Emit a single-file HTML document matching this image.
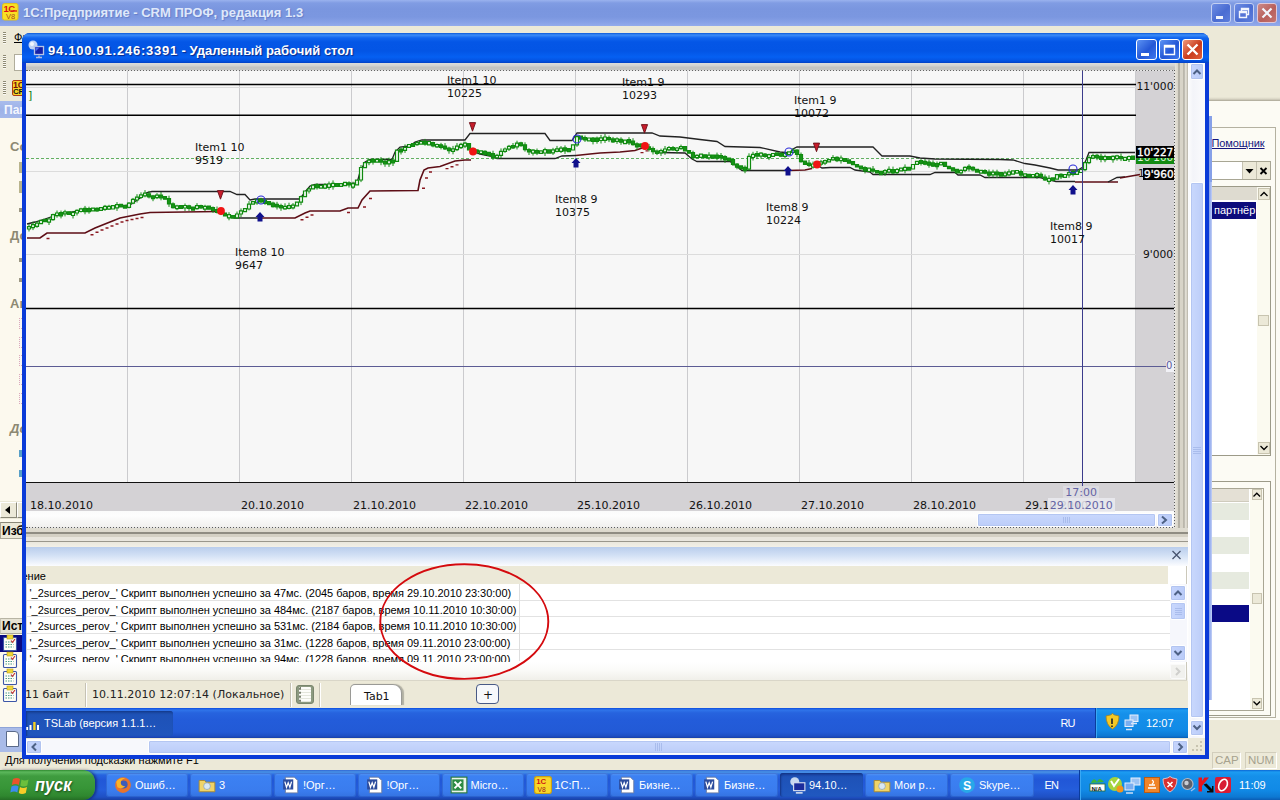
<!DOCTYPE html>
<html lang="ru">
<head>
<meta charset="utf-8">
<title>1С:Предприятие - CRM ПРОФ, редакция 1.3</title>
<style>
*{box-sizing:border-box;margin:0;padding:0}
html,body{width:1280px;height:800px;overflow:hidden;background:#ece9d8}
body{position:relative;font-family:"Liberation Sans",sans-serif;font-size:11px;color:#000}
.a{position:absolute}
.t{position:absolute;white-space:nowrap;line-height:1}
.dv{font-family:"DejaVu Sans","Liberation Sans",sans-serif}
svg{position:absolute;left:0;top:0;overflow:visible}
svg text{font-family:"DejaVu Sans","Liberation Sans",sans-serif;font-size:11px;fill:#111}
/* ---------- outer 1C window ---------- */
#otitle{left:0;top:0;width:1280px;height:26px;background:linear-gradient(#9ab2ee 0,#809ce3 3px,#7a96df 9px,#7b97e0 17px,#86a0e6 22px,#93abec 26px)}
#otitle .cap{left:23px;top:6px;font-weight:bold;font-size:13px;color:#dfe8fa;text-shadow:1px 1px 1px rgba(80,100,180,.5)}
.obtn{top:3px;width:20px;height:20px;border:1px solid #c4d0f2;border-radius:3px;background:linear-gradient(135deg,#6f8ee4,#4a6cd2 55%,#5d7edc)}
.obtn.x{background:linear-gradient(135deg,#cc8a88,#b8605c 55%,#c47470);border-color:#e0c8d8}
/* ---------- inner RDP window ---------- */
#win{left:22px;top:33px;width:1187px;height:726px;background:#0a3bd8;border-radius:8px 8px 0 0}
#wtitle{left:0;top:0;width:1187px;height:30px;border-radius:8px 8px 0 0;background:linear-gradient(#0a58d8 0,#3c8cf8 2px,#1064ee 5px,#0456e6 9px,#0355e5 18px,#0560f2 24px,#0452e0 28px,#0340c4 30px)}
#wtitle .cap{left:25px;top:10.500px;font-weight:bold;font-size:13px;letter-spacing:0;color:#fff;text-shadow:1px 1px 1px #0a2a8a}
.wbtn{top:6px;width:21px;height:21px;border:1px solid #fff;border-radius:3px;background:linear-gradient(135deg,#5c93f4,#2457d6 55%,#3f78ee)}
.wbtn.x{background:linear-gradient(135deg,#ee9a7c,#c93a1c 55%,#e0603c)}
#client{left:3px;top:30px;width:1179px;height:692px;background:#ece9d8;overflow:hidden}
#pc{left:-26px;top:-63px;width:1280px;height:800px} /* page-coordinate wrapper */
/* XP scrollbar bits */
.sbtn{background:linear-gradient(90deg,#c6d5fd,#b9cbf8);border:1px solid #fff;border-radius:2px;box-shadow:inset 0 0 0 1px #b2c4f0}
.thumb{background:linear-gradient(90deg,#c9d8fd,#bccdf9);border:1px solid #fff;border-radius:2px;box-shadow:inset 0 0 0 1px #b4c6f2}
.thumbh{background:linear-gradient(#c9d8fd,#bccdf9);border:1px solid #fff;border-radius:2px;box-shadow:inset 0 0 0 1px #b4c6f2}
.row{left:26px;width:1144px;height:16px;border-bottom:1px solid #e2e2e2;background:#fff}
.row span{position:absolute;left:3.500px;top:3px;white-space:nowrap;line-height:12px;font-size:11px;letter-spacing:-.02px}
#tb{left:0;top:770px;width:1280px;height:30px;background:linear-gradient(#3168d5 0,#4993e6 2px,#2663e0 5px,#2157d7 10px,#245ddb 20px,#1f50c4 27px,#1941a5 30px)}
.tk{top:3px;width:81px;height:24px;border-radius:3px;background:linear-gradient(#5a98f2 0,#3c81f3 3px,#3a7cee 18px,#3472e0 24px);box-shadow:inset 0 0 0 1px rgba(30,70,170,.35)}
.tk.on{background:linear-gradient(#183f9c 0,#1e52b7 4px,#2058c0);box-shadow:inset 1px 1px 2px #143484}
.tk b{position:absolute;left:29px;top:7px;font-weight:normal;font-size:11px;color:#fff;white-space:nowrap;line-height:1}
.ic{position:absolute;left:8px;top:3px;width:18px;height:18px}
</style>
</head>
<body>
<!-- outer window title -->
<div id="otitle" class="a">
  <svg width="24" height="27" viewBox="0 0 24 27"><rect x="2.500" y="3.500" width="15.500" height="16.500" rx="2" fill="#f8e024" stroke="#e0c020"/><text x="3.500" y="11.500" style="font:bold 9.500px 'Liberation Sans',sans-serif;fill:#dc1414;letter-spacing:-.6px">1C</text><path d="M11,11h6" stroke="#dc1414" stroke-width="1.300"/><text x="6" y="18.500" style="font:7.500px 'Liberation Sans',sans-serif;fill:#a84a1c">V8</text></svg>
  <div class="t cap">1С:Предприятие - CRM ПРОФ, редакция 1.3</div>
  <div class="a obtn" style="left:1211px"></div>
  <div class="a obtn" style="left:1234px"></div>
  <div class="a obtn x" style="left:1257px"></div>
  <svg width="1280" height="27" viewBox="0 1 1280 27"><g fill="none" stroke="#f2f5fd"><path d="M1216,18.500h7" stroke-width="3"/><path d="M1241.500,9.500h7v6h-7zM1241.500,10.500h7" stroke-width="1.400"/><path d="M1239.500,12.500h7v6h-7zM1239.500,13.500h7" stroke-width="1.400" fill="#5473d6"/><path d="M1262.500,9.500l9,9M1271.500,9.500l-9,9" stroke-width="2.200"/></g></svg>
</div>
<!-- outer window: left strip -->
<div class="a" style="left:0;top:26px;width:23px;height:75px;background:#ece9d8"></div>
<div class="a" style="left:3px;top:32px;width:3px;height:12px;background:repeating-linear-gradient(#8f8b74 0 1px,#fbfaf4 1px 2px)"></div>
<div class="a" style="left:3px;top:55px;width:3px;height:14px;background:repeating-linear-gradient(#8f8b74 0 1px,#fbfaf4 1px 2px)"></div>
<div class="a" style="left:3px;top:81px;width:3px;height:14px;background:repeating-linear-gradient(#8f8b74 0 1px,#fbfaf4 1px 2px)"></div>
<div class="t" style="left:14px;top:32px;font-size:11px;text-decoration:underline;text-underline-offset:1px">Файл</div>
<div class="a" style="left:14px;top:54px;width:30px;height:17px;background:#fff;border:1px solid #b0ad9c"></div>
<div class="a" style="left:12px;top:80px;width:16px;height:16px;background:#f6d428;border:1px solid #b03a14;border-radius:2px"></div>
<div class="t" style="left:13px;top:81px;font-size:9px;font-weight:bold;color:#7a0c0c;letter-spacing:-.3px">1C</div>
<div class="t" style="left:13px;top:88px;font-size:8px;font-weight:bold;color:#111;letter-spacing:-.3px">CRM</div>
<div class="a" style="left:0;top:101px;width:23px;height:17px;background:linear-gradient(#a9bcec,#9db2e8 50%,#a4b8ea)"></div>
<div class="t" style="left:4px;top:104px;font-size:12px;font-weight:bold;color:#f4f7fe">Панель</div>
<div class="a" style="left:0;top:118px;width:23px;height:634px;background:#fcf9ee"></div>
<div class="t" style="left:10px;top:140px;font-size:13px;font-weight:bold;color:#8d8973">Сотрудник</div>
<div class="a" style="left:19px;top:162px;width:6px;height:11px;background:#b9b48c"></div>
<div class="a" style="left:19px;top:181px;width:6px;height:12px;background:#b9b48c"></div>
<div class="a" style="left:19px;top:208px;width:4px;height:4px;background:#9c9884"></div>
<div class="t" style="left:10px;top:229px;font-size:13px;font-weight:bold;color:#8d8973">Документы</div>
<div class="a" style="left:19px;top:258px;width:4px;height:4px;background:#9c9884"></div>
<div class="a" style="left:19px;top:278px;width:4px;height:4px;background:#9c9884"></div>
<div class="t" style="left:10px;top:297px;font-size:13px;font-weight:bold;color:#8d8973">Анализ</div>
<div class="a" style="left:19px;top:318px;width:5px;height:11px;background:#f8f6f4;border:1px dotted #dcaab8"></div>
<div class="a" style="left:19px;top:337px;width:5px;height:11px;background:#f8f6f4;border:1px dotted #dcaab8"></div>
<div class="a" style="left:19px;top:355px;width:5px;height:11px;background:#f8f6f4;border:1px dotted #dcaab8"></div>
<div class="a" style="left:19px;top:374px;width:5px;height:11px;background:#f8f6f4;border:1px dotted #dcaab8"></div>
<div class="a" style="left:19px;top:393px;width:5px;height:11px;background:#f8f6f4;border:1px dotted #dcaab8"></div>
<div class="t" style="left:10px;top:422px;font-size:13px;font-weight:bold;font-style:italic;color:#8d8973">Документы</div>
<div class="a" style="left:19px;top:450px;width:4px;height:7px;background:#58a0c8"></div>
<div class="a" style="left:19px;top:470px;width:4px;height:7px;background:#58a0c8"></div>
<div class="a" style="left:0;top:501px;width:23px;height:18px;background:#ece9d8"></div>
<div class="a" style="left:0;top:502px;width:17px;height:16px;background:#ece9d8;border:1px solid #fff;border-right-color:#8a8878;border-bottom-color:#8a8878"></div>
<svg width="30" height="800" viewBox="0 0 30 800"><path d="M10,506v8l-5,-4z" fill="#000"/></svg>
<div class="a" style="left:17px;top:502px;width:6px;height:16px;background:#ece9d8;border:1px solid #fff;border-bottom-color:#8a8878"></div>
<div class="a" style="left:0;top:522px;width:23px;height:17px;background:#ece9d8;border-top:1px solid #8a8878;border-bottom:1px solid #aaa798;border-left:1px solid #aaa798"></div>
<div class="t" style="left:2px;top:525px;font-size:12px;font-weight:bold;color:#000">Избранное</div>
<div class="a" style="left:0;top:618px;width:23px;height:16px;background:#e6e3d4;border-top:1px solid #b8b5a4;border-bottom:1px solid #aaa798;border-left:1px solid #c8c5b4"></div>
<div class="t" style="left:2px;top:620px;font-size:12px;font-weight:bold;color:#000">История</div>
<div class="a" style="left:0;top:635px;width:23px;height:16.500px;background:#0a0a80"></div>
<svg width="30" height="800" viewBox="0 0 30 800">
  <g><rect x="3.500" y="637.500" width="13" height="13" rx="1" fill="#fffef6" stroke="#3c56a8" stroke-width="1.100"/><rect x="7" y="635" width="6" height="4" fill="#f0d838" stroke="#b89c1c" stroke-width=".6"/><path d="M5.500,642h8M5.500,644.500h8M5.500,647h8" stroke="#4a9a8a" stroke-width="1" stroke-dasharray="1.500 1"/><path d="M11,640.500l1.500,1.800l2.500,-3.300" stroke="#c02c2c" stroke-width="1.100" fill="none"/></g>
  <g transform="translate(0,17)"><rect x="3.500" y="637.500" width="13" height="13" rx="1" fill="#fffef6" stroke="#3c56a8" stroke-width="1.100"/><rect x="7" y="635" width="6" height="4" fill="#f0d838" stroke="#b89c1c" stroke-width=".6"/><path d="M5.500,642h8M5.500,644.500h8M5.500,647h8" stroke="#4a9a8a" stroke-width="1" stroke-dasharray="1.500 1"/><path d="M11,640.500l1.500,1.800l2.500,-3.300" stroke="#c02c2c" stroke-width="1.100" fill="none"/></g><g transform="translate(0,34)"><rect x="3.500" y="637.500" width="13" height="13" rx="1" fill="#fffef6" stroke="#3c56a8" stroke-width="1.100"/><rect x="7" y="635" width="6" height="4" fill="#f0d838" stroke="#b89c1c" stroke-width=".6"/><path d="M5.500,642h8M5.500,644.500h8M5.500,647h8" stroke="#4a9a8a" stroke-width="1" stroke-dasharray="1.500 1"/><path d="M11,640.500l1.500,1.800l2.500,-3.300" stroke="#c02c2c" stroke-width="1.100" fill="none"/></g><g transform="translate(0,51)"><rect x="3.500" y="637.500" width="13" height="13" rx="1" fill="#fffef6" stroke="#3c56a8" stroke-width="1.100"/><rect x="7" y="635" width="6" height="4" fill="#f0d838" stroke="#b89c1c" stroke-width=".6"/><path d="M5.500,642h8M5.500,644.500h8M5.500,647h8" stroke="#4a9a8a" stroke-width="1" stroke-dasharray="1.500 1"/><path d="M11,640.500l1.500,1.800l2.500,-3.300" stroke="#c02c2c" stroke-width="1.100" fill="none"/></g>
</svg>
<div class="a" style="left:0;top:727px;width:23px;height:25px;background:#a9bbe8;border-top:1px solid #8ea4d8"></div>
<div class="a" style="left:6px;top:731px;width:13px;height:16px;background:#fff;border:1px solid #5a6a8a;border-radius:0 4px 0 0"></div>
<!-- outer status bar -->
<div class="a" style="left:0;top:752px;width:1280px;height:18px;background:#ece9d8"></div>
<div class="t" style="left:5px;top:755px;font-size:11px;color:#000">Для получения подсказки нажмите F1</div>
<div class="a" style="left:1212px;top:752px;width:29px;height:17px;border:1px solid #d2cebc;border-right-color:#fff;border-bottom-color:#fff"></div>
<div class="a" style="left:1245px;top:752px;width:32px;height:17px;border:1px solid #d2cebc;border-right-color:#fff;border-bottom-color:#fff"></div>
<div class="t" style="left:1215px;top:755px;font-size:11.5px;color:#a6a28e">CAP</div>
<div class="t" style="left:1248px;top:755px;font-size:11.5px;color:#a6a28e">NUM</div>
<!-- outer window: right panel -->
<div class="a" style="left:1209px;top:97px;width:71px;height:4px;background:linear-gradient(#ece9d8,#d9d5c5 50%,#a9a594)"></div>
<div class="a" style="left:1209px;top:101px;width:71px;height:619px;background:#fcfbf4"></div>
<div class="a" style="left:1209px;top:127px;width:67px;height:591px;border:1px solid #b4b1a0;border-left:0;background:#fcfbf4"></div>
<div class="t" style="left:1211.500px;top:138px;font-size:11px;letter-spacing:-.1px;color:#16167e;text-decoration:underline">Помощник</div>
<div class="a" style="left:1209px;top:161px;width:62px;height:19px;background:#fff;border:1px solid #a8a694;border-left:0"></div>
<div class="a" style="left:1242px;top:162px;width:15px;height:17px;background:#ece9d8;border-left:1px solid #c4c1b0;border-right:1px solid #c4c1b0"></div>
<div class="a" style="left:1257px;top:162px;width:13px;height:17px;background:#ece9d8"></div>
<svg width="1280" height="800" viewBox="0 0 1280 800"><path d="M1245.500,169h8l-4,4.500z" fill="#000"/><path d="M1260.500,168l6,6M1266.500,168l-6,6" stroke="#000" stroke-width="1.800"/></svg>
<!-- list 1 -->
<div class="a" style="left:1209px;top:186px;width:62px;height:270px;background:#fff;border:1px solid #9c9a88;border-left:0"></div>
<div class="a" style="left:1257px;top:187px;width:13px;height:268px;background:#fbfaf0"></div>
<div class="a" style="left:1209px;top:187px;width:48px;height:13px;background:#dedbd0"></div>
<div class="a" style="left:1210px;top:202px;width:46px;height:17px;background:#0c0c7c"></div>
<div class="t" style="left:1214px;top:205px;font-size:11px;color:#fff">партнёр</div>
<div class="a" style="left:1258px;top:188px;width:12px;height:12px;background:#ece9d8;border:1px solid #c8c4b0"></div>
<div class="a" style="left:1258px;top:315px;width:11px;height:11px;background:#ece9d8;border:1px solid #c8c4b0"></div>
<div class="a" style="left:1258px;top:442px;width:12px;height:12px;background:#ece9d8;border:1px solid #c8c4b0"></div>
<!-- list 2 -->
<div class="a" style="left:1209px;top:481px;width:62px;height:235px;background:#fcfbf4;border:1px solid #9c9a88;border-left:0"></div>
<div class="a" style="left:1209px;top:488px;width:55px;height:223px;background:#fff;border:1px solid #a9a694;border-left:0"></div>
<div class="a" style="left:1250px;top:489px;width:13px;height:221px;background:#fbfaf0"></div>
<div class="a" style="left:1209px;top:489px;width:40px;height:13px;background:#e4e0d5;border-bottom:1px solid #cfcbbd"></div>
<div class="a" style="left:1209px;top:502.700px;width:40px;height:17.200px;background:#e6eadf"></div>
<div class="a" style="left:1209px;top:537.100px;width:40px;height:17.200px;background:#e6eadf"></div>
<div class="a" style="left:1209px;top:571.500px;width:40px;height:17.200px;background:#e6eadf"></div>
<div class="a" style="left:1209px;top:605px;width:40px;height:16.700px;background:#0a0a86"></div>
<div class="a" style="left:1251.500px;top:489px;width:10.500px;height:11px;background:#ece9d8;border:1px solid #c8c4b0"></div>
<div class="a" style="left:1251.500px;top:593px;width:10.500px;height:10.500px;background:#ece9d8;border:1px solid #c8c4b0"></div>
<div class="a" style="left:1251.500px;top:698px;width:10.500px;height:11px;background:#ece9d8;border:1px solid #c8c4b0"></div>
<svg width="1280" height="800" viewBox="0 0 1280 800"><g fill="none" stroke="#000" stroke-width="1.300"><path d="M1260.500,196l3.500,-3.500l3.500,3.500"/><path d="M1260.500,446l3.500,3.500l3.500,-3.500"/><path d="M1253.500,496.500l3.300,-3.300l3.300,3.300"/><path d="M1253.500,701.500l3.300,3.300l3.300,-3.300"/></g></svg>
<div class="a" style="left:1209px;top:116px;width:3px;height:66px;background:#86a0e8"></div>
<div class="a" style="left:1209px;top:182px;width:3px;height:518px;background:linear-gradient(90deg,#7f9cea,#c3d0f6)"></div>
<!-- inner window -->
<div id="win" class="a">
  <div id="wtitle" class="a"><div class="a" style="left:1px;top:0">
    <svg width="30" height="30" viewBox="0 0 30 30"><circle cx="10" cy="12" r="4.500" fill="#dfe9f8" opacity=".85"/><circle cx="9" cy="11" r="2" fill="#fff" opacity=".8"/><rect x="11.500" y="13.500" width="9" height="8" fill="#1420a8" stroke="#b8c4e4" stroke-width="1.300"/><path d="M12.500,14.500h4l-4,4z" fill="#4c6ce8"/><path d="M13,24.500h6M16,22.500v2" stroke="#aebce0" stroke-width="1.300"/></svg>
    <div class="t cap"><span style="letter-spacing:.75px">94.100.91.246:3391</span> - Удаленный рабочий стол</div>
    <div class="a wbtn" style="left:1113px"></div>
    <div class="a wbtn" style="left:1136px"></div>
    <div class="a wbtn x" style="left:1159px"></div>
    <svg width="1186" height="30" viewBox="0 0 1186 30"><g fill="none" stroke="#fff"><path d="M1118,21.500h8" stroke-width="3"/><path d="M1141.500,12.500h10v9h-10z" stroke-width="1.400"/><path d="M1141.500,13.500h10" stroke-width="2.400"/><path d="M1164.500,11.500l10,10M1174.500,11.500l-10,10" stroke-width="2.400"/></g></svg>
  </div></div>
  <div class="a" style="left:1px;top:0">
  <div id="client" class="a"><div id="pc" class="a">
    <!-- chart panel -->
    <div class="a" style="left:26px;top:63px;width:1162px;height:7px;background:linear-gradient(#dedddb,#d2d1cf 3px,#c4c3c1 4px,#c6c5c3)"></div>
    <div class="a" style="left:26px;top:70px;width:1149px;height:1px;background:repeating-linear-gradient(90deg,#666 0 1.5px,#e4e4e4 1.5px 3px)"></div>
    <div class="a" style="left:26px;top:71px;width:1110px;height:412px;background:#f7f7f7"></div>
    <div class="a" style="left:1136px;top:71px;width:38px;height:412px;background:#d4d2d5"></div>
    <div class="a" style="left:26px;top:483px;width:1148px;height:28px;background:#d4d2d5"></div>
    <div class="a" style="left:26px;top:482px;width:1148px;height:1px;background:#111"></div>
    <div class="a" style="left:26px;top:511px;width:1148px;height:16px;background:linear-gradient(#fbfbfb,#fdfdfd 30%,#f1f0ee)"></div>
    <div class="a" style="left:26px;top:527px;width:1149px;height:1px;background:repeating-linear-gradient(90deg,#5a5a5a 0 1.5px,#e4e4e4 1.5px 3px)"></div>
    <div class="a" style="left:1174px;top:70px;width:1px;height:458px;background:repeating-linear-gradient(#5a5a5a 0 1.5px,#e4e4e4 1.5px 3px)"></div>
    <!-- nested frames right/bottom of chart -->
    <div class="a" style="left:1175px;top:63px;width:13px;height:478px;background:linear-gradient(90deg,#e6e3da 0,#d8d4c8 3px,#8f8c82 4px,#d8d4c8 5px,#d8d4c8 8px,#9c998e 9px,#e4e1d8 10px,#d8d4c8 12px,#a8a59a 13px)"></div>
    <div class="a" style="left:26px;top:528px;width:1162px;height:19px;background:linear-gradient(#dfdcd1 0,#dcd8cc 4px,#8f8c82 4.5px,#8f8c82 5.5px,#d4d0c4 6px,#d4d0c4 8.5px,#e9e6de 9px,#e9e6de 12.5px,#9a978c 13px,#9a978c 14px,#ebe8de 14.5px,#f2f0e7 19px)"></div>
    <!-- chart h-scrollbar -->
    <div class="a thumbh" style="left:977px;top:513px;width:179px;height:14px"></div>
    <div class="a sbtn" style="left:1157px;top:513px;width:16px;height:14px"></div>
    <svg width="1280" height="800" viewBox="0 0 1280 800">
<line x1="127.5" y1="71" x2="127.5" y2="482" stroke="#cbcbce"/>
<line x1="239.5" y1="71" x2="239.5" y2="482" stroke="#cbcbce"/>
<line x1="351.5" y1="71" x2="351.5" y2="482" stroke="#cbcbce"/>
<line x1="463.5" y1="71" x2="463.5" y2="482" stroke="#cbcbce"/>
<line x1="575.5" y1="71" x2="575.5" y2="482" stroke="#cbcbce"/>
<line x1="687.5" y1="71" x2="687.5" y2="482" stroke="#cbcbce"/>
<line x1="799.5" y1="71" x2="799.5" y2="482" stroke="#cbcbce"/>
<line x1="911.5" y1="71" x2="911.5" y2="482" stroke="#cbcbce"/>
<line x1="1023.5" y1="71" x2="1023.5" y2="482" stroke="#cbcbce"/>
<line x1="1135.5" y1="71" x2="1135.5" y2="482" stroke="#cbcbce"/>
<line x1="26" y1="87.5" x2="1136" y2="87.5" stroke="#dcdcdc"/>
<line x1="26" y1="171.5" x2="1136" y2="171.5" stroke="#dcdcdc"/>
<line x1="26" y1="254.5" x2="1136" y2="254.5" stroke="#dcdcdc"/>
<line x1="26" y1="84.5" x2="1136" y2="84.5" stroke="#000" stroke-width="1.4"/>
<line x1="26" y1="115.3" x2="1136" y2="115.3" stroke="#000" stroke-width="1.4"/>
<line x1="26" y1="308.5" x2="1174" y2="308.5" stroke="#000" stroke-width="1.4"/>
<line x1="26" y1="366.5" x2="1166" y2="366.5" stroke="#5c5c94"/>
<line x1="26" y1="158.5" x2="1136" y2="158.5" stroke="#62b062" stroke-dasharray="3 2"/>
<polyline points="27,224 35,222 45,219 60,214 85,210 115,207 130,205 140,198 147,192.5 152,191.5 230,191.5 237,194.5 245,194.5 250,200 255,199 300,199 305,192 310,186 315,184.5 340,184.5 357,183 360,172 365,162 370,159.5 392,159.5 395,152 400,147 410,146 415,142 422,140 465,140 470,133.5 545,133.5 550,140.5 572,140.5 577,133 652,133 660,136 680,137 700,139.5 717,141.5 725,146.5 760,147.5 780,152 790,153 793,149 797,147 873,147 882,156 910,156 920,158 935,159 1000,159.5 1013,160 1025,163.5 1035,165 1050,168 1058,170 1078,170 1083,167 1086,160 1089,152.5 1135,152.5" fill="none" stroke="#222" stroke-width="1.3"/>
<polyline points="27,238 40,238 47,233 85,233 95,228 110,222 120,218 140,214 150,212.5 218,211.5" fill="none" stroke="#5e0e16" stroke-width="1.6"/>
<path d="M46.5,238.5h3M90.5,234.8h3M95.5,232.2h3M100.5,230.0h3M105.5,228.0h3M110.5,226.0h3M115.5,224.0h3M120.5,222.0h3M125.5,220.5h3M130.5,219.5h3M135.5,218.5h3M140.5,217.5h3" stroke="#8a1820" stroke-width="1.4" fill="none"/>
<polyline points="221,211 230,217 235,218 261,218" fill="none" stroke="#222" stroke-width="1.3"/>
<polyline points="261,218 295,218 305,213 310,211 340,211 348,208 358,208 362,200 370,191 418,190.5 420,180 424,170 428,168 440,166.5 455,161 465,160 471,160" fill="none" stroke="#5e0e16" stroke-width="1.6"/>
<path d="M300.5,219.8h3M305.5,217.2h3M310.5,215.0h3M347.0,212.5h3M363.0,207.0h3M369.0,198.5h3M422.0,188.2h3M425.0,178.0h3M429.0,172.0h3M445.5,168.6h3M450.5,166.8h3M455.5,164.9h3" stroke="#8a1820" stroke-width="1.4" fill="none"/>
<polyline points="473,151.5 480,154 490,156 497,158.5 555,158.5 562,156 576,155.5" fill="none" stroke="#222" stroke-width="1.3"/>
<polyline points="576,155.5 590,154 600,153 620,152 635,150.5 645,147" fill="none" stroke="#5e0e16" stroke-width="1.6"/>
<path d="M640.5,152.6h3M645.5,150.9h3" stroke="#8a1820" stroke-width="1.4" fill="none"/>
<polyline points="645,146 655,151 660,152.5 685,153 692,159 697,161.5 730,161.5 735,165 742,170.5 790,170.5" fill="none" stroke="#222" stroke-width="1.3"/>
<polyline points="788,170.5 805,170 812,168.5" fill="none" stroke="#5e0e16" stroke-width="1.6"/>
<polyline points="817,165 822,168 830,167.5 850,167.5 855,170 870,172 873,174.5 930,174.5 935,172.5 955,172.5 958,175 980,175 985,177.5 1040,177.5 1050,180 1056,181.5 1075,181.5" fill="none" stroke="#222" stroke-width="1.3"/>
<polyline points="1075,182 1118,182" fill="none" stroke="#5e0e16" stroke-width="1.6"/>
<polyline points="1108,182 1117,177.5 1125,177" fill="none" stroke="#222" stroke-width="1.3"/>
<polyline points="1120,178 1140,174.5" fill="none" stroke="#5e0e16" stroke-width="1.6"/>
<path d="M29.0,224.1V231.5M33.0,221.6V230.1M37.0,221.1V227.8M49.0,217.5V225.0M53.0,213.7V220.7M57.0,210.5V217.7M61.0,210.6V218.4M65.0,209.8V216.4M73.0,210.9V218.5M77.0,209.4V215.5M81.0,207.8V212.5M85.0,205.9V214.3M89.0,206.7V213.7M97.0,207.3V211.8M105.0,204.9V210.9M109.0,204.8V210.0M117.0,202.1V210.9M129.0,202.2V208.4M133.0,197.9V204.2M137.0,194.2V202.5M141.0,192.3V198.9M145.0,190.1V197.3M149.0,190.9V198.4M153.0,194.9V201.2M157.0,193.1V199.1M161.0,192.0V200.3M169.0,195.7V206.9M173.0,202.4V208.5M177.0,204.8V210.2M185.0,203.5V211.0M189.0,204.8V210.9M197.0,203.2V209.6M201.0,204.7V208.8M205.0,204.8V211.1M213.0,206.5V212.9M217.0,206.5V213.5M221.0,210.0V215.1M229.0,212.2V220.3M237.0,211.5V218.8M241.0,208.4V217.0M249.0,201.1V210.4M257.0,198.0V204.8M261.0,197.8V203.4M265.0,198.8V204.8M273.0,201.7V207.5M277.0,201.8V209.5M281.0,203.7V210.8M285.0,203.3V209.7M289.0,202.7V209.4M293.0,203.1V209.4M301.0,195.6V205.1M309.0,187.4V193.5M317.0,183.2V189.6M325.0,183.2V189.1M329.0,181.5V189.8M333.0,180.4V189.7M349.0,181.3V187.5M353.0,181.7V189.0M361.0,165.0V182.1M369.0,159.1V165.2M373.0,158.0V164.6M381.0,157.1V165.2M385.0,158.3V166.8M389.0,157.7V166.9M393.0,157.5V166.0M401.0,147.6V154.5M405.0,144.4V152.9M417.0,141.1V145.8M425.0,138.9V145.7M433.0,141.7V147.3M437.0,143.5V147.9M441.0,142.8V149.4M445.0,143.1V150.0M449.0,146.7V153.7M453.0,145.9V154.3M457.0,143.1V151.1M461.0,142.8V149.0M465.0,141.6V148.1M473.0,147.7V153.4M477.0,149.0V154.2M485.0,150.3V155.4M493.0,150.7V159.9M497.0,153.8V158.9M501.0,148.4V158.3M505.0,147.5V152.9M509.0,144.9V151.0M513.0,143.0V149.0M517.0,140.7V149.5M521.0,141.8V146.7M525.0,142.3V151.6M529.0,148.1V155.0M533.0,149.2V155.6M537.0,148.5V155.1M545.0,147.7V156.0M553.0,147.8V154.9M557.0,145.9V152.3M561.0,146.1V153.0M565.0,145.4V153.9M577.0,135.2V146.8M585.0,135.5V141.9M593.0,137.0V144.4M597.0,136.6V143.7M601.0,134.9V143.5M605.0,134.0V142.9M609.0,135.6V142.1M613.0,136.9V142.9M617.0,137.3V143.9M621.0,137.3V144.8M629.0,137.2V145.0M633.0,138.2V145.6M637.0,142.3V149.9M641.0,143.1V148.1M645.0,143.9V148.7M649.0,143.9V151.4M653.0,146.5V154.5M657.0,149.5V155.1M661.0,148.7V155.9M665.0,146.0V154.8M669.0,146.0V151.3M673.0,146.0V150.8M677.0,147.0V153.4M681.0,144.6V149.6M693.0,150.7V159.6M697.0,154.3V158.6M709.0,152.2V159.8M717.0,152.6V160.2M721.0,153.0V160.5M725.0,155.2V162.9M733.0,158.2V166.0M737.0,163.1V169.3M745.0,165.4V173.2M749.0,153.3V170.7M753.0,151.8V160.5M757.0,151.0V159.1M761.0,152.2V158.7M765.0,153.0V157.9M769.0,153.7V160.1M781.0,152.2V157.1M785.0,151.9V159.0M793.0,148.2V153.7M797.0,149.2V157.5M801.0,152.5V162.6M809.0,160.0V167.2M813.0,161.5V168.7M817.0,161.9V168.0M821.0,159.9V166.1M825.0,159.6V165.1M833.0,155.1V160.7M837.0,156.3V162.1M841.0,155.5V163.6M865.0,166.2V173.4M873.0,166.0V173.1M885.0,169.1V175.8M889.0,166.4V173.6M893.0,166.6V174.0M897.0,168.0V174.2M905.0,164.4V173.3M921.0,159.1V165.5M925.0,158.9V165.2M929.0,159.6V167.7M933.0,160.4V167.0M937.0,161.5V169.6M961.0,169.3V174.8M965.0,166.4V172.3M969.0,164.3V171.4M973.0,166.3V171.3M985.0,169.2V174.2M989.0,169.5V178.1M993.0,169.7V177.3M997.0,169.7V178.0M1005.0,170.8V177.3M1009.0,169.3V176.3M1021.0,169.5V178.1M1037.0,172.2V178.8M1041.0,172.4V178.0M1045.0,174.5V180.9M1049.0,175.3V184.4M1061.0,173.3V179.1M1069.0,169.6V177.8M1073.0,170.0V176.4M1085.0,161.7V171.2M1089.0,155.1V164.2M1093.0,153.6V159.1M1097.0,153.8V160.2M1101.0,153.8V162.3M1105.0,154.7V162.2M1113.0,155.4V162.7M1117.0,154.8V160.7M1121.0,153.5V161.1M1129.0,155.5V162.0" stroke="#148c14" stroke-width="1" fill="none"/>
<path d="M27.5,226.6h3v2.4h-3zM31.5,224.6h3v3.0h-3zM35.5,223.1h3v3.2h-3zM39.5,220.3h3v3.3h-3zM47.5,219.0h3v3.1h-3zM51.5,214.7h3v5.0h-3zM55.5,213.0h3v2.6h-3zM63.5,211.8h3v2.1h-3zM71.5,212.4h3v3.1h-3zM75.5,210.4h3v2.6h-3zM79.5,208.8h3v2.7h-3zM91.5,208.2h3v2.7h-3zM99.5,207.7h3v2.6h-3zM103.5,206.4h3v3.0h-3zM107.5,206.3h3v2.8h-3zM111.5,205.6h3v3.4h-3zM115.5,204.6h3v3.3h-3zM127.5,203.2h3v4.2h-3zM131.5,199.4h3v3.8h-3zM135.5,197.2h3v2.8h-3zM139.5,194.8h3v2.7h-3zM143.5,193.1h3v2.7h-3zM155.5,195.1h3v2.5h-3zM175.5,205.8h3v2.8h-3zM183.5,205.5h3v2.5h-3zM195.5,205.7h3v3.0h-3zM203.5,206.3h3v2.8h-3zM227.5,214.7h3v3.1h-3zM235.5,214.0h3v3.8h-3zM239.5,210.9h3v3.1h-3zM243.5,208.7h3v2.9h-3zM247.5,204.1h3v4.9h-3zM251.5,201.6h3v2.5h-3zM255.5,199.5h3v3.3h-3zM283.5,206.3h3v2.5h-3zM287.5,205.7h3v2.7h-3zM291.5,205.1h3v2.8h-3zM295.5,202.1h3v3.7h-3zM299.5,196.6h3v5.5h-3zM303.5,191.0h3v5.7h-3zM307.5,188.9h3v2.1h-3zM311.5,185.2h3v3.7h-3zM319.5,185.3h3v2.9h-3zM323.5,184.7h3v3.4h-3zM327.5,184.0h3v3.3h-3zM331.5,183.4h3v3.3h-3zM339.5,183.6h3v2.7h-3zM343.5,182.3h3v3.3h-3zM351.5,183.7h3v3.4h-3zM355.5,180.1h3v4.7h-3zM359.5,167.5h3v12.5h-3zM363.5,162.7h3v4.9h-3zM367.5,160.1h3v2.6h-3zM375.5,159.3h3v2.9h-3zM387.5,160.7h3v3.1h-3zM395.5,150.2h3v11.2h-3zM403.5,147.4h3v3.0h-3zM407.5,144.5h3v2.8h-3zM415.5,142.6h3v2.1h-3zM419.5,141.3h3v2.9h-3zM427.5,141.5h3v3.3h-3zM435.5,144.5h3v2.4h-3zM451.5,148.9h3v2.4h-3zM455.5,146.1h3v3.5h-3zM459.5,144.3h3v3.3h-3zM463.5,143.1h3v3.0h-3zM479.5,150.8h3v2.8h-3zM495.5,155.3h3v2.5h-3zM499.5,151.4h3v3.9h-3zM503.5,149.0h3v2.4h-3zM507.5,146.4h3v2.7h-3zM515.5,143.2h3v3.7h-3zM531.5,150.2h3v2.9h-3zM539.5,150.8h3v2.5h-3zM543.5,149.7h3v3.3h-3zM551.5,149.8h3v3.1h-3zM555.5,148.9h3v2.4h-3zM559.5,148.1h3v3.3h-3zM571.5,144.8h3v5.2h-3zM575.5,136.7h3v8.1h-3zM587.5,138.0h3v2.9h-3zM599.5,137.9h3v2.6h-3zM603.5,137.0h3v3.3h-3zM615.5,138.8h3v2.6h-3zM623.5,140.2h3v3.4h-3zM659.5,150.7h3v2.2h-3zM663.5,149.0h3v2.8h-3zM667.5,147.5h3v2.3h-3zM675.5,148.0h3v2.4h-3zM679.5,146.6h3v2.0h-3zM695.5,155.3h3v2.4h-3zM699.5,154.1h3v3.2h-3zM707.5,155.2h3v2.6h-3zM747.5,156.3h3v12.9h-3zM751.5,154.3h3v3.2h-3zM759.5,153.2h3v3.0h-3zM767.5,154.7h3v2.9h-3zM771.5,153.5h3v2.9h-3zM783.5,153.4h3v3.0h-3zM787.5,151.8h3v2.9h-3zM791.5,150.2h3v2.1h-3zM811.5,164.0h3v3.2h-3zM815.5,163.4h3v2.6h-3zM819.5,161.9h3v2.3h-3zM823.5,160.6h3v2.5h-3zM827.5,159.7h3v2.1h-3zM831.5,157.6h3v2.2h-3zM839.5,158.0h3v2.6h-3zM867.5,168.2h3v3.3h-3zM883.5,170.6h3v2.6h-3zM887.5,169.4h3v2.7h-3zM895.5,169.5h3v3.2h-3zM899.5,168.2h3v2.7h-3zM903.5,167.4h3v2.9h-3zM911.5,164.5h3v4.5h-3zM915.5,161.4h3v3.0h-3zM939.5,162.3h3v2.5h-3zM959.5,170.3h3v2.6h-3zM963.5,167.4h3v2.9h-3zM979.5,170.4h3v2.8h-3zM991.5,172.2h3v2.6h-3zM1003.5,172.8h3v3.0h-3zM1007.5,171.8h3v3.1h-3zM1011.5,170.9h3v3.2h-3zM1015.5,170.5h3v2.6h-3zM1023.5,173.8h3v2.5h-3zM1031.5,174.5h3v2.6h-3zM1035.5,173.7h3v2.6h-3zM1047.5,178.3h3v3.1h-3zM1055.5,174.6h3v4.5h-3zM1063.5,174.5h3v2.8h-3zM1067.5,172.6h3v2.2h-3zM1075.5,171.1h3v3.2h-3zM1079.5,169.5h3v3.0h-3zM1083.5,162.7h3v7.0h-3zM1087.5,157.6h3v5.1h-3zM1091.5,155.6h3v2.5h-3zM1103.5,156.7h3v3.0h-3zM1111.5,156.4h3v3.2h-3zM1115.5,155.8h3v2.9h-3zM1123.5,157.3h3v3.0h-3zM1127.5,156.5h3v3.0h-3z" stroke="#108a10" stroke-width="1.2" fill="#f2faf2"/>
<path d="M43.5,219.3h3v2.4h-3zM59.5,212.6h3v3.2h-3zM67.5,211.8h3v2.5h-3zM83.5,208.4h3v3.3h-3zM87.5,208.7h3v3.0h-3zM95.5,208.3h3v2.5h-3zM119.5,204.4h3v2.5h-3zM123.5,205.4h3v2.7h-3zM147.5,193.9h3v3.0h-3zM151.5,195.9h3v2.8h-3zM159.5,195.0h3v2.8h-3zM163.5,196.6h3v2.6h-3zM167.5,198.7h3v5.2h-3zM171.5,203.9h3v3.7h-3zM179.5,205.6h3v2.9h-3zM187.5,205.8h3v2.5h-3zM191.5,207.0h3v3.1h-3zM199.5,205.7h3v2.1h-3zM207.5,206.1h3v3.1h-3zM211.5,207.5h3v2.9h-3zM215.5,209.5h3v3.0h-3zM219.5,211.0h3v2.1h-3zM223.5,213.1h3v2.9h-3zM231.5,215.6h3v2.5h-3zM259.5,199.3h3v2.7h-3zM263.5,200.3h3v3.0h-3zM267.5,201.5h3v3.2h-3zM271.5,203.2h3v3.4h-3zM275.5,204.3h3v2.7h-3zM279.5,205.7h3v2.1h-3zM315.5,184.7h3v2.9h-3zM335.5,183.6h3v2.9h-3zM347.5,182.8h3v2.2h-3zM371.5,159.5h3v2.6h-3zM379.5,159.6h3v2.5h-3zM383.5,161.3h3v2.5h-3zM391.5,160.0h3v3.0h-3zM399.5,149.1h3v2.9h-3zM411.5,143.5h3v2.8h-3zM423.5,141.4h3v2.8h-3zM431.5,142.7h3v3.2h-3zM439.5,144.8h3v2.6h-3zM443.5,146.1h3v2.9h-3zM447.5,148.2h3v2.5h-3zM467.5,143.6h3v6.2h-3zM471.5,148.7h3v3.2h-3zM475.5,150.0h3v2.2h-3zM483.5,151.3h3v3.1h-3zM487.5,152.3h3v3.1h-3zM491.5,153.7h3v4.2h-3zM511.5,145.5h3v2.5h-3zM519.5,142.8h3v2.8h-3zM523.5,144.8h3v4.8h-3zM527.5,149.6h3v2.4h-3zM535.5,150.5h3v2.6h-3zM547.5,149.9h3v3.2h-3zM563.5,147.9h3v3.0h-3zM567.5,148.6h3v3.0h-3zM579.5,136.2h3v2.9h-3zM583.5,137.5h3v2.4h-3zM591.5,138.0h3v3.4h-3zM595.5,138.1h3v3.2h-3zM607.5,137.6h3v2.0h-3zM611.5,138.9h3v3.0h-3zM619.5,139.3h3v2.9h-3zM627.5,139.7h3v3.3h-3zM631.5,141.2h3v3.4h-3zM635.5,143.8h3v3.1h-3zM639.5,144.1h3v2.5h-3zM643.5,145.4h3v2.3h-3zM647.5,146.9h3v2.5h-3zM651.5,148.5h3v3.1h-3zM655.5,151.0h3v2.5h-3zM671.5,147.5h3v2.3h-3zM683.5,146.6h3v4.2h-3zM687.5,150.6h3v2.6h-3zM691.5,152.7h3v4.9h-3zM703.5,154.8h3v2.8h-3zM711.5,155.0h3v3.2h-3zM715.5,155.1h3v3.1h-3zM719.5,155.5h3v2.5h-3zM723.5,156.7h3v3.2h-3zM727.5,158.0h3v2.7h-3zM731.5,159.7h3v4.8h-3zM735.5,164.1h3v3.1h-3zM739.5,165.9h3v3.0h-3zM743.5,167.4h3v3.3h-3zM755.5,153.5h3v2.6h-3zM763.5,154.0h3v2.4h-3zM775.5,152.9h3v2.5h-3zM779.5,153.7h3v2.5h-3zM795.5,150.2h3v4.3h-3zM799.5,154.5h3v7.1h-3zM803.5,161.1h3v3.2h-3zM807.5,163.0h3v2.3h-3zM835.5,157.3h3v3.3h-3zM843.5,158.6h3v2.8h-3zM847.5,159.9h3v3.3h-3zM851.5,161.6h3v3.1h-3zM855.5,164.7h3v2.2h-3zM859.5,166.2h3v2.8h-3zM863.5,167.7h3v3.2h-3zM871.5,169.0h3v2.1h-3zM875.5,170.5h3v2.5h-3zM879.5,171.3h3v3.3h-3zM891.5,169.6h3v3.4h-3zM907.5,167.4h3v2.7h-3zM919.5,160.6h3v2.9h-3zM923.5,161.4h3v2.8h-3zM927.5,162.1h3v3.1h-3zM931.5,162.9h3v3.2h-3zM935.5,163.5h3v3.1h-3zM943.5,162.3h3v4.1h-3zM947.5,166.4h3v2.2h-3zM951.5,167.8h3v3.0h-3zM955.5,169.4h3v3.4h-3zM967.5,166.3h3v2.7h-3zM971.5,167.3h3v2.5h-3zM975.5,169.4h3v2.7h-3zM983.5,170.7h3v2.5h-3zM987.5,172.0h3v3.2h-3zM995.5,172.2h3v2.8h-3zM999.5,172.7h3v3.4h-3zM1019.5,171.5h3v3.6h-3zM1027.5,174.3h3v2.9h-3zM1039.5,174.4h3v2.6h-3zM1043.5,177.0h3v2.8h-3zM1051.5,177.9h3v2.5h-3zM1059.5,174.3h3v2.7h-3zM1071.5,171.5h3v2.9h-3zM1095.5,155.3h3v2.4h-3zM1099.5,156.3h3v3.0h-3zM1107.5,156.6h3v2.9h-3zM1119.5,156.5h3v2.1h-3zM1131.5,156.0h3v3.3h-3z" stroke="#108a10" stroke-width="1.2" fill="#189418"/>
<path d="M217.4,190.6h6.2l-3.1,8.6z" fill="#c81c2a" stroke="#6a1018" stroke-width="0.9"/>
<path d="M469.4,122.6h6.2l-3.1,8.6z" fill="#c81c2a" stroke="#6a1018" stroke-width="0.9"/>
<path d="M641.4,124.6h6.2l-3.1,8.6z" fill="#c81c2a" stroke="#6a1018" stroke-width="0.9"/>
<path d="M813.4,143.1h6.2l-3.1,8.6z" fill="#c81c2a" stroke="#6a1018" stroke-width="0.9"/>
<circle cx="221" cy="211" r="3.9" fill="#f01414"/>
<circle cx="473" cy="151.5" r="3.9" fill="#f01414"/>
<circle cx="645" cy="146" r="3.9" fill="#f01414"/>
<circle cx="817" cy="164.5" r="3.9" fill="#f01414"/>
<circle cx="261" cy="200" r="4" fill="none" stroke="#2a2ad8" stroke-width="1.1"/>
<circle cx="577" cy="139" r="4" fill="none" stroke="#2a2ad8" stroke-width="1.1"/>
<circle cx="789" cy="152" r="4" fill="none" stroke="#2a2ad8" stroke-width="1.1"/>
<circle cx="1073" cy="169" r="4" fill="none" stroke="#2a2ad8" stroke-width="1.1"/>
<path d="M260,212l4.5,5h-2v4.5h-5v-4.5h-2z" fill="#10108c"/>
<path d="M576,158l4.5,5h-2v4.5h-5v-4.5h-2z" fill="#10108c"/>
<path d="M788,166l4.5,5h-2v4.5h-5v-4.5h-2z" fill="#10108c"/>
<path d="M1073,185l4.5,5h-2v4.5h-5v-4.5h-2z" fill="#10108c"/>
<line x1="1082.5" y1="71" x2="1082.5" y2="497" stroke="#3c3c8c"/>
<text x="195" y="151">Item1 10</text><text x="195" y="164">9519</text>
<text x="235" y="256">Item8 10</text><text x="235" y="269">9647</text>
<text x="447" y="84">Item1 10</text><text x="447" y="97">10225</text>
<text x="555" y="203">Item8 9</text><text x="555" y="216">10375</text>
<text x="622" y="86">Item1 9</text><text x="622" y="99">10293</text>
<text x="794" y="104">Item1 9</text><text x="794" y="117">10072</text>
<text x="766" y="211">Item8 9</text><text x="766" y="224">10224</text>
<text x="1050" y="230">Item8 9</text><text x="1050" y="243">10017</text>
      <path d="M1162,516.5l4,3.5l-4,3.5" fill="none" stroke="#4d6185" stroke-width="2"/>
      <g stroke="#a9bcec"><path d="M1063.5,517v6M1065.5,517v6M1067.5,517v6M1069.5,517v6"/></g>
    </svg>
    <div class="t dv" style="left:28px;top:90px;font-size:11px;color:#0c7c0c">]</div>
    <!-- axis labels -->
    <div class="t dv" style="left:1136.5px;top:82px;font-size:10.7px;color:#111">11'000</div>
    <div class="t dv" style="left:1143px;top:250px;font-size:10.7px;color:#111">9'000</div>
    <div class="t dv" style="left:1166px;top:361px;font-size:10px;color:#5a5aa0;background:#f1f1f6;width:8px;height:11px">0</div>
    <div class="a" style="left:1136px;top:157.500px;width:38px;height:6.500px;background:#128a12;overflow:hidden"><div class="t dv" style="left:1px;top:-6px;font-size:10.5px;color:#dff5df">10'100</div></div>
    <div class="a" style="left:1136px;top:145.500px;width:38px;height:12.300px;background:#000;overflow:hidden"><div class="t dv" style="left:1px;top:1px;font-size:10.5px;color:#fff;-webkit-text-stroke:.35px #fff">10'227</div></div>
    <div class="t dv" style="left:1138px;top:168px;font-size:10.5px;color:#111">10</div>
    <div class="a" style="left:1143px;top:167.500px;width:31px;height:12.300px;background:#000;overflow:hidden"><div class="t dv" style="left:1px;top:1px;font-size:10.5px;color:#fff;-webkit-text-stroke:.35px #fff">9'960</div></div>
    <!-- date labels -->
    <div class="t dv" style="left:30px;top:500px;font-size:11px;color:#111">18.10.2010</div>
    <div class="t dv" style="left:241px;top:500px;font-size:11px;color:#111">20.10.2010</div>
    <div class="t dv" style="left:353px;top:500px;font-size:11px;color:#111">21.10.2010</div>
    <div class="t dv" style="left:465px;top:500px;font-size:11px;color:#111">22.10.2010</div>
    <div class="t dv" style="left:577px;top:500px;font-size:11px;color:#111">25.10.2010</div>
    <div class="t dv" style="left:689px;top:500px;font-size:11px;color:#111">26.10.2010</div>
    <div class="t dv" style="left:801px;top:500px;font-size:11px;color:#111">27.10.2010</div>
    <div class="t dv" style="left:913px;top:500px;font-size:11px;color:#111">28.10.2010</div>
    <div class="t dv" style="left:1025px;top:500px;font-size:11px;color:#111">29.10.2010</div>
    <div class="t dv" style="left:1063.200px;top:486px;font-size:11px;color:#6464a4;background:rgba(222,221,226,.93);padding:1px 2px 0 2px;height:12px">17:00</div>
    <div class="t dv" style="left:1047.700px;top:498px;font-size:11px;color:#6464a4;background:rgba(234,234,240,.86);padding:2px 2px 0 2px;height:14px">29.10.2010</div>
    <!-- messages panel -->
    <div class="a" style="left:26px;top:547px;width:1162px;height:19px;background:linear-gradient(#b9cdec,#d3e1f5 45%,#fbfcff)"></div>
    <svg width="1280" height="800" viewBox="0 0 1280 800"><path d="M1172.5,551l8,8M1180.5,551l-8,8" stroke="#46536e" stroke-width="1.3" fill="none"/></svg>
    <div class="a" style="left:26px;top:566px;width:1162px;height:115px;background:#fff"></div>
    <div class="a" style="left:26px;top:566px;width:1142px;height:18px;background:#ece9d8"></div>
    <div class="t" style="left:21.500px;top:571px;font-size:11px">ение</div>
    <div class="a row" style="top:584px;height:17px"><span>'_2surces_perov_' Скрипт выполнен успешно за 47мс. (2045 баров, время 29.10.2010 23:30:00)</span></div>
    <div class="a row" style="top:601px;height:16px"><span>'_2surces_perov_' Скрипт выполнен успешно за 484мс. (2187 баров, время 10.11.2010 10:30:00)</span></div>
    <div class="a row" style="top:617px;height:17px"><span>'_2surces_perov_' Скрипт выполнен успешно за 531мс. (2184 баров, время 10.11.2010 10:30:00)</span></div>
    <div class="a row" style="top:634px;height:16px"><span>'_2surces_perov_' Скрипт выполнен успешно за 31мс. (1228 баров, время 09.11.2010 23:00:00)</span></div>
    <div class="a row" style="top:650px;height:12px;border:0;overflow:hidden"><span>'_2surces_perov_' Скрипт выполнен успешно за 94мс. (1228 баров, время 09.11.2010 23:00:00)</span></div>
    <div class="a" style="left:26px;top:584px;width:1px;height:77px;background:#d8d8d8"></div>
    <div class="a" style="left:519px;top:584px;width:1px;height:77px;background:#dedede"></div>
    <div class="a" style="left:26px;top:662px;width:1162px;height:19px;background:linear-gradient(#fff,#fbfbf9 40%,#efeee8)"></div>
    <div class="a" style="left:1186px;top:566px;width:1px;height:115px;background:#cbc8ba"></div>
    <div class="a" style="left:26px;top:680px;width:1161px;height:1px;background:#d9d6c8"></div>
    <!-- messages scrollbar -->
    <div class="a" style="left:1170px;top:584px;width:17px;height:78px;background:#f6f7fc"></div>
    <div class="a sbtn" style="left:1170px;top:585px;width:16px;height:16px"></div>
    <div class="a thumb" style="left:1170px;top:602px;width:16px;height:18px"></div>
    <div class="a sbtn" style="left:1170px;top:645px;width:16px;height:16px"></div>
    <div class="a" style="left:1170px;top:664px;width:16px;height:15px;background:#f1f1ee;border:1px solid #fafafa;border-radius:2px"></div>
    <svg width="1280" height="800" viewBox="0 0 1280 800">
      <g fill="none" stroke="#4d6185" stroke-width="2"><path d="M1174.5,595l3.5,-3.5l3.5,3.5"/><path d="M1174.5,651l3.5,3.5l3.5,-3.5"/></g>
      <path d="M1176,668l3.5,3.5l-3.5,3.5" fill="none" stroke="#cfcfcc" stroke-width="2"/>
      <g stroke="#a9bcec"><path d="M1175,608.5h7M1175,610.5h7M1175,612.5h7M1175,614.5h7"/></g>
      <!-- red annotation ellipse -->
      <ellipse cx="464.300" cy="621.600" rx="84" ry="57.300" fill="none" stroke="#d40a0e" stroke-width="1.900"/>
    </svg>
    <!-- remote status bar -->
    <div class="a" style="left:26px;top:681px;width:1162px;height:28px;background:#ece9d8"></div>
    <div class="t dv" style="left:25px;top:689px;font-size:11px;color:#222">11 байт</div>
    <div class="a" style="left:85px;top:683px;width:2px;height:24px;background:linear-gradient(90deg,#c5c2b4 50%,#fff 50%)"></div>
    <div class="t dv" style="left:92px;top:689px;font-size:11px;letter-spacing:.06px;color:#222">10.11.2010 12:07:14 (Локальное)</div>
    <div class="a" style="left:290px;top:683px;width:2px;height:24px;background:linear-gradient(90deg,#c5c2b4 50%,#fff 50%)"></div>
    <div class="a" style="left:319px;top:683px;width:2px;height:24px;background:linear-gradient(90deg,#c5c2b4 50%,#fff 50%)"></div>
    <div class="a" style="left:296px;top:685px;width:18px;height:19px;background:#8c9a80;border-radius:3px;border:1px solid #7a866e"></div>
    <div class="a" style="left:299px;top:687px;width:12px;height:15px;background:repeating-linear-gradient(#fdfdfa 0 2px,#e4e6dc 2px 3px);border-left:2px dotted #7a8070;border-radius:1px"></div>
    <div class="a" style="left:350px;top:684px;width:52px;height:21px;background:#fff;border:1px solid #9a9a96;border-bottom:0;border-radius:5px 9px 0 0;box-shadow:1.5px 0 1px rgba(130,130,120,.55)"></div>
    <div class="t dv" style="left:364px;top:691px;font-size:11px;color:#111">Tab1</div>
    <div class="a" style="left:476px;top:684px;width:23px;height:20px;background:#f6f8fb;border:1px solid #485a86;border-radius:4px"></div>
    <div class="t dv" style="left:483px;top:689px;font-size:12px;color:#111">+</div>
    <!-- remote taskbar -->
    <div class="a" style="left:26px;top:708px;width:1162px;height:30px;background:linear-gradient(#0a4ce0 0,#2f74ea 2px,#2663de 5px,#235cda 12px,#225ad6 24px,#1d4fc4 28px,#183fa8 30px)"></div>
    <div class="a" style="left:26px;top:711px;width:147px;height:25px;background:linear-gradient(#1a469f,#1e52b7 4px,#1f55bd);border-radius:0 3px 3px 0;box-shadow:inset 1px 1px 2px #143a8a"></div>
    <svg width="1280" height="800" viewBox="0 0 1280 800"><path d="M26.300,727h1.800v3h-1.800zM29.500,725h2v5h-2zM37,725h2v5h-2z" fill="#fff"/><path d="M33.200,722h2.400v8h-2.400z" fill="#f4d020"/></svg>
    <div class="t" style="left:44px;top:718px;font-size:11px;letter-spacing:-.05px;color:#fff">TSLab (версия 1.1.1…</div>
    <div class="t" style="left:1060.500px;top:718px;font-size:11px;letter-spacing:-.9px;color:#fff">RU</div>
    <div class="a" style="left:1095px;top:708px;width:93px;height:30px;background:linear-gradient(#0c6ad8 0,#1c9af0 2px,#1590ea 6px,#118ae6 22px,#0d78d2 28px,#0b5cb4 30px);border-left:1px solid #0a3c9c;box-shadow:inset 1px 0 0 #3aa8f4"></div>
    <svg width="1280" height="800" viewBox="0 0 1280 800">
      <path d="M1106,716q6,-1 6.500,-2.500q.5,1.500 6.500,2.500q0,9 -6.500,13q-6.500,-4 -6.500,-13z" fill="#f4c824" stroke="#a8821a" stroke-width=".8"/>
      <path d="M1112,718.500v5.500M1112,725.500v1.500" stroke="#222" stroke-width="1.6"/>
      <rect x="1130" y="715" width="8" height="6.500" fill="#9cc4f4" stroke="#e8f0fc" stroke-width="1"/><rect x="1125" y="720" width="8" height="6.500" fill="#7aaef0" stroke="#e8f0fc" stroke-width="1"/><path d="M1126,729.500h6M1131,723.500h6" stroke="#d8e4f8" stroke-width="1.300"/>
    </svg>
    <div class="t" style="left:1146px;top:718px;font-size:11px;color:#fff">12:07</div>
  </div></div>
  <!-- inner window scrollbars (window coordinates) -->
  <div class="a" style="left:1165px;top:30px;width:17px;height:676px;background:linear-gradient(90deg,#fdfdfd,#f3f4f9 30%,#fbfbfd)"></div>
  <div class="a sbtn" style="left:1166.500px;top:30px;width:14.500px;height:16.500px"></div>
  <div class="a thumb" style="left:1166.500px;top:148.500px;width:14.500px;height:536.500px"></div>
  <div class="a sbtn" style="left:1166.500px;top:687px;width:14.500px;height:15.500px"></div>
  <div class="a" style="left:3px;top:706px;width:1179px;height:16px;background:#f7f8fc"></div>
  <div class="a sbtn" style="left:3px;top:706.500px;width:16px;height:14.500px"></div>
  <div class="a thumbh" style="left:125px;top:706.500px;width:1023px;height:14.500px"></div>
  <div class="a sbtn" style="left:1149px;top:706.500px;width:16px;height:14.500px"></div>
  <div class="a" style="left:1165px;top:705px;width:17px;height:17px;background:#ece9d8"></div>
  <svg width="1186" height="726" viewBox="0 0 1186 726">
    <g fill="none" stroke="#4d6185" stroke-width="2"><path d="M1170.500,41l3.500,-3.500l3.500,3.500"/><path d="M1170.500,692.500l3.500,3.500l3.500,-3.500"/><path d="M13,710.500l-3.500,3.500l3.500,3.500"/><path d="M1155.500,710.500l3.500,3.500l-3.500,3.500"/></g>
    <g stroke="#a9bcec"><path d="M1170,414.500h8M1170,416.500h8M1170,418.500h8M1170,420.500h8"/><path d="M632.500,710v8M634.500,710v8M636.500,710v8M638.500,710v8"/></g>
    <g fill="#c8c4b0"><rect x="1177" y="716" width="2" height="2"/><rect x="1173" y="716" width="2" height="2"/><rect x="1169" y="716" width="2" height="2"/><rect x="1177" y="712" width="2" height="2"/><rect x="1173" y="712" width="2" height="2"/><rect x="1177" y="708" width="2" height="2"/></g>
  </svg>
</div></div>
<!-- XP taskbar -->

<div id="tb" class="a">
  <div class="a" style="left:0;top:0;width:95px;height:30px;border-radius:0 12px 12px 0;background:linear-gradient(#2f8a2f 0,#5cb85c 2px,#3f9c3f 6px,#379537 18px,#2f872f 26px,#256e25 30px);box-shadow:2px 0 3px rgba(0,0,40,.45)"></div>
  <svg width="40" height="30" viewBox="-2 0 40 30"><path d="M11,9q4,-2 7,0l-1.200,6q-3,-2 -7,0z" fill="#e8542c"/><path d="M19.500,9.500q3,2 7,0l-1.200,6q-4,2 -7,0z" fill="#6cbf3c"/><path d="M9.500,16.500q4,-2 7,0l-1.200,6q-3,-2 -7,0z" fill="#3c8cf0"/><path d="M18,17q3,2 7,0l-1.200,6q-4,2 -7,0z" fill="#f8cc28"/></svg>
  <div class="t" style="left:35px;top:5px;font-size:19px;font-weight:bold;font-style:italic;color:#fff;text-shadow:1px 1px 2px #1a4a1a;transform:scaleX(.86);transform-origin:0 0">пуск</div>
  <div class="a tk" style="left:106px;width:82px"><svg class="ic" viewBox="0 0 16 16"><circle cx="8" cy="8" r="7" fill="#e8742c"/><circle cx="8.500" cy="7.500" r="3.600" fill="#3c5cb8"/><path d="M2,5q3,-4 8,-3q-4,1 -4,4q0,3 4,3q-3,3 -7,1z" fill="#f8b428"/></svg><b>Ошиб…</b></div>
  <div class="a tk" style="left:190px;width:82px"><svg class="ic" viewBox="0 0 16 16"><path d="M1,4h5l1,1.500h8v8.500h-14z" fill="#f0d468" stroke="#a8882c" stroke-width=".8"/><circle cx="8" cy="9" r="3" fill="#d8e8f4" stroke="#8898a8" stroke-width=".6"/></svg><b>3</b></div>
  <div class="a tk" style="left:274px;width:81.5px"><svg class="ic" viewBox="0 0 16 16"><path d="M3,1h8l3,3v11h-11z" fill="#fff" stroke="#6a7aa0" stroke-width=".8"/><rect x="1" y="3" width="9" height="9" fill="#2c4c9c"/><path d="M2.500,5l1.500,5l1.500,-4l1.500,4l1.500,-5" stroke="#fff" stroke-width="1.100" fill="none"/></svg><b>!Орг…</b></div>
  <div class="a tk" style="left:357.5px;width:82px"><svg class="ic" viewBox="0 0 16 16"><path d="M3,1h8l3,3v11h-11z" fill="#fff" stroke="#6a7aa0" stroke-width=".8"/><rect x="1" y="3" width="9" height="9" fill="#2c4c9c"/><path d="M2.500,5l1.500,5l1.500,-4l1.500,4l1.500,-5" stroke="#fff" stroke-width="1.100" fill="none"/></svg><b>!Орг…</b></div>
  <div class="a tk" style="left:441.5px;width:82px"><svg class="ic" viewBox="0 0 16 16"><rect x="1" y="1" width="14" height="14" fill="#e8f4e8" stroke="#2c7a3c"/><rect x="2" y="3" width="10" height="10" fill="#2c8a44"/><path d="M4,5l6,6M10,5l-6,6" stroke="#fff" stroke-width="1.800"/></svg><b>Micro…</b></div>
  <div class="a tk" style="left:525.5px;width:82.5px"><svg class="ic" viewBox="0 0 16 16"><rect x=".5" y=".5" width="15" height="15" rx="2" fill="#f8d828" stroke="#c8a018"/><text x="2" y="7.500" style="font:bold 7px 'Liberation Sans',sans-serif;fill:#d01818">1C</text><text x="3" y="14" style="font:6px 'Liberation Sans',sans-serif;fill:#a01818">V8</text></svg><b>1С:П…</b></div>
  <div class="a tk" style="left:610px;width:83px"><svg class="ic" viewBox="0 0 16 16"><path d="M3,1h8l3,3v11h-11z" fill="#fff" stroke="#6a7aa0" stroke-width=".8"/><rect x="1" y="3" width="9" height="9" fill="#2c4c9c"/><path d="M2.500,5l1.500,5l1.500,-4l1.500,4l1.500,-5" stroke="#fff" stroke-width="1.100" fill="none"/></svg><b>Бизне…</b></div>
  <div class="a tk" style="left:695px;width:83px"><svg class="ic" viewBox="0 0 16 16"><path d="M3,1h8l3,3v11h-11z" fill="#fff" stroke="#6a7aa0" stroke-width=".8"/><rect x="1" y="3" width="9" height="9" fill="#2c4c9c"/><path d="M2.500,5l1.500,5l1.500,-4l1.500,4l1.500,-5" stroke="#fff" stroke-width="1.100" fill="none"/></svg><b>Бизне…</b></div>
  <div class="a tk on" style="left:780px;width:83px"><svg class="ic" viewBox="0 0 16 16"><circle cx="6" cy="5" r="4" fill="#c8d8f0"/><rect x="5" y="6" width="10" height="7" fill="#1c2c9c" stroke="#d8e0f0"/><path d="M7,15h6" stroke="#d8e0f0" stroke-width="1.400"/></svg><b>94.10…</b></div>
  <div class="a tk" style="left:865px;width:83px"><svg class="ic" viewBox="0 0 16 16"><path d="M1,4h5l1,1.500h8v8.500h-14z" fill="#f0d468" stroke="#a8882c" stroke-width=".8"/><circle cx="8" cy="9" r="3" fill="#d8e8f4" stroke="#8898a8" stroke-width=".6"/></svg><b>Мои р…</b></div>
  <div class="a tk" style="left:950px;width:83.5px"><svg class="ic" viewBox="0 0 16 16"><circle cx="8" cy="8" r="7" fill="#28a8e8"/><text x="4.500" y="12" style="font:bold 11px 'Liberation Sans',sans-serif;fill:#fff">S</text></svg><b>Skype…</b></div>
  <div class="t" style="left:1044.500px;top:10px;font-size:11px;letter-spacing:-.8px;color:#fff">EN</div>
  <div class="a" style="left:1079px;top:0;width:201px;height:30px;background:linear-gradient(#0c66d4 0,#1c9cf2 2px,#1590ea 6px,#118ae6 20px,#0d78d2 27px,#0b5cb4 30px);border-left:1px solid #0a3c9c;box-shadow:inset 1px 0 0 #3aa8f4"></div>
  <svg width="1280" height="30" viewBox="0 0 1280 30">
    <rect x="1090" y="14" width="15" height="7" fill="#fff" stroke="#2a6a2a" stroke-width=".8"/><path d="M1091,13q3,-7 6,-1q2,-6 7,0z" fill="#3cb43c"/><text x="1091.500" y="20.500" style="font:bold 6px 'Liberation Sans',sans-serif;fill:#111">N/A</text>
    <circle cx="1115" cy="14" r="7" fill="#a4d43c"/><path d="M1111,11l3,5l5,-7" stroke="#fff" stroke-width="2" fill="none"/><circle cx="1120" cy="19" r="3.500" fill="#f4941c"/>
    <rect x="1131" y="8" width="9" height="7" fill="#9cc4f4" stroke="#e8f0fc"/><rect x="1125" y="13" width="9" height="7" fill="#7aaef0" stroke="#e8f0fc"/><path d="M1126,23h7" stroke="#d8e4f8" stroke-width="1.400"/>
    <rect x="1144.500" y="7.500" width="15" height="15" fill="#f08428" stroke="#b85c14"/><path d="M1148,18h8M1149,15h6M1152,10q3,2 0,4" stroke="#fff" stroke-width="1.300" fill="none"/>
    <path d="M1163,9q6,-1 7,-2.500q1,1.500 7,2.500q0,9 -7,13q-7,-4 -7,-13z" fill="#d83030" stroke="#f4d4d4" stroke-width=".8"/><path d="M1167.500,12l5,5M1172.500,12l-5,5" stroke="#fff" stroke-width="1.600"/>
    <circle cx="1187.500" cy="14" r="5.500" fill="#5c606c" stroke="#b4b8c4" stroke-width="1.200"/><circle cx="1186.500" cy="13" r="2.200" fill="#c8ccd4"/><path d="M1191,21l4,-3" stroke="#9cc0f0" stroke-width="1.200"/>
    <path d="M1198.500,7.500v14h3.500v-5.500l7,-8.500h-4.500l-2.500,3.500v-3.500z" fill="#e8141c"/><path d="M1203.500,14.500l3,-1l5.500,5.500v-3h1.500v6.500h-6.500v-1.500h3z" fill="#0c0c0c"/>
    <rect x="1215" y="7" width="16" height="16" rx="2" fill="#d81c34"/><ellipse cx="1223" cy="15" rx="4" ry="6" fill="none" stroke="#fff" stroke-width="1.600" transform="rotate(25 1223 15)"/>
  </svg>
  <div class="t" style="left:1239px;top:10px;font-size:11px;color:#fff">11:09</div>
</div>
</body>
</html>
